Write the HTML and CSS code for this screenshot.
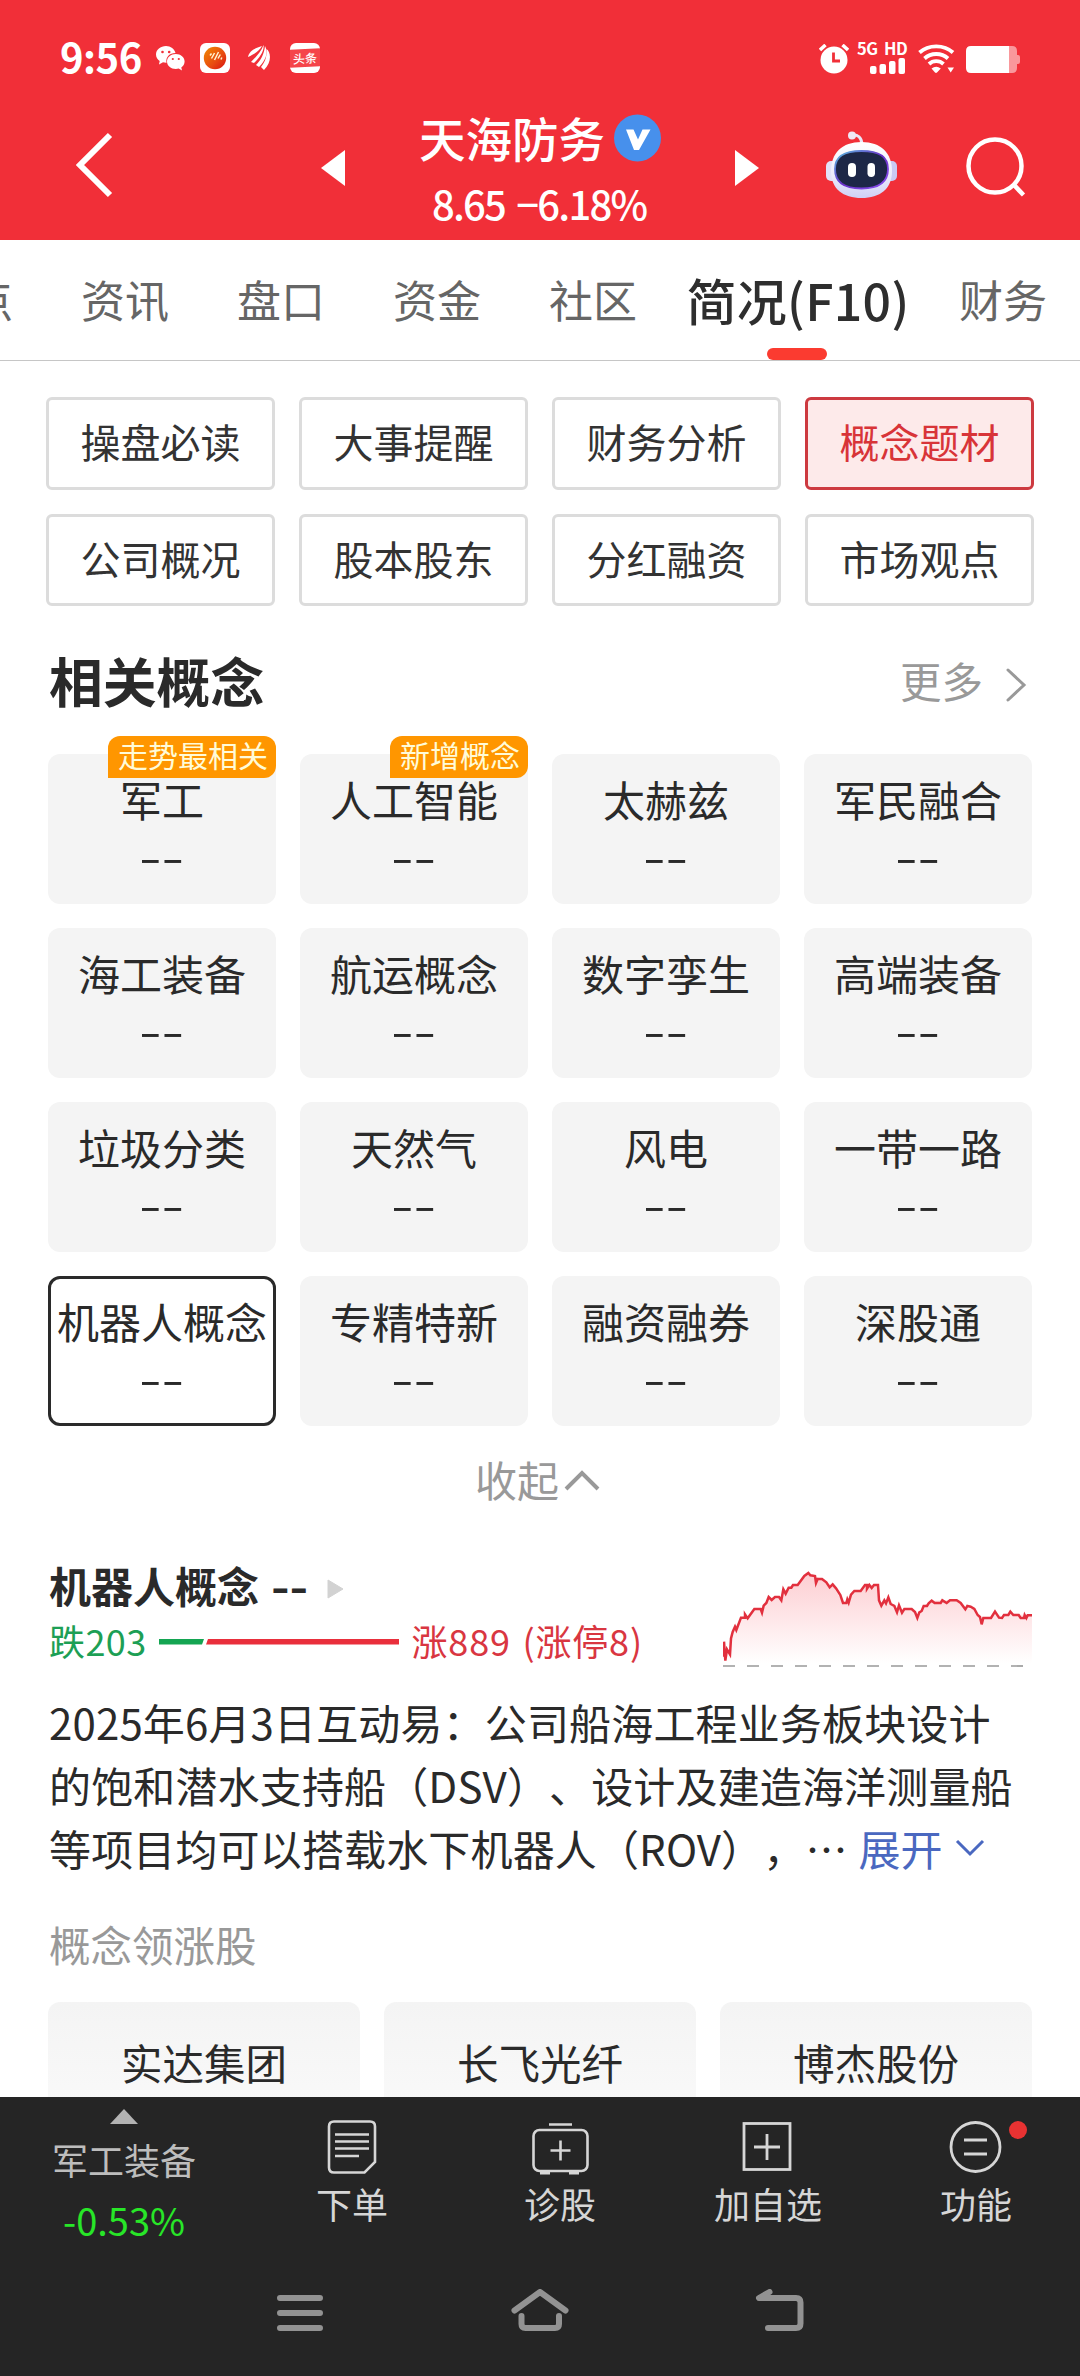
FILE: index.html
```html
<!DOCTYPE html>
<html lang="zh-CN">
<head>
<meta charset="utf-8">
<title>天海防务 简况</title>
<link rel="stylesheet" href="styles.css">
</head>
<body>
<div class="app">
  <header class="header">
    <div class="status">
      <span class="clock">9:56</span>
      <div class="status-apps">
        <svg width="29" height="26" viewBox="0 0 29 26"><path fill="#fff" d="M10 1C4.500 1 0 4.700 0 9.400c0 2.700 1.500 5 3.700 6.500L3 19.500l4-2.200c1 .3 2 .4 3 .4h.5C9.500 12 13.500 8 19.500 8 18.500 4 14.700 1 10 1z"/><path fill="#fff" d="M19.800 9c-5 0-8.800 3.300-8.800 7.500s3.900 7.500 8.800 7.500c1 0 2-.1 2.900-.4l3.300 1.800-.7-2.900c2-1.400 3.300-3.500 3.300-6C28.600 12.300 24.700 9 19.800 9z"/><g fill="#f12f38"><circle cx="6.500" cy="7" r="1.300"/><circle cx="13.200" cy="7" r="1.300"/><circle cx="16.800" cy="14" r="1.100"/><circle cx="22.800" cy="14" r="1.100"/></g></svg>
        <svg width="30" height="30" viewBox="0 0 30 30"><defs><linearGradient id="orb" x1="0" y1="0" x2="1" y2="1"><stop offset="0" stop-color="#f08a00"/><stop offset=".6" stop-color="#e84a10"/><stop offset="1" stop-color="#d81010"/></linearGradient></defs><rect width="30" height="30" rx="6" fill="#fff"/><circle cx="15" cy="15" r="11.200" fill="url(#orb)"/><path d="M10 12.500l1.500-2M11.500 15.500l3-5.500M14.500 17l4-8M18 15.500l2.300-4M21 16.500l.8-2" stroke="#fff3d0" stroke-width="1.500" fill="none"/></svg>
        <svg width="23" height="26" viewBox="0 0 23 26"><g fill="#fff"><path d="M0 12C1 6 7 3 14 1 12 5 7 9 0 12z"/><path d="M3 17C8 12 13 7 15.500 0c1 6-4 13-9.500 18z"/><path d="M8 20c5-5 8-11 9-19 4 7 0 15-6 21z"/><path d="M13 22c4-5 6-10 5.500-18C23 7 24 17 16 25z"/></g></svg>
        <div class="news-icon"><span>头条</span></div>
      </div>
      <div class="status-right">
        <svg class="alarm" width="30" height="30" viewBox="0 0 30 30"><circle cx="15" cy="16" r="13.500" fill="#fff"/><path d="M1 6l5.500-5M29 6l-5.500-5" stroke="#fff" stroke-width="3.500"/><path d="M14.500 8.500V17H21" fill="none" stroke="#f12f38" stroke-width="2.800"/></svg>
        <div class="cell">
          <span>5G&nbsp; HD</span>
          <svg width="36" height="16" viewBox="0 0 36 16" fill="#fff"><rect x="0" y="8" width="6.500" height="8" rx="2"/><rect x="9.500" y="6" width="6.500" height="10" rx="2"/><rect x="19" y="3" width="6.500" height="13" rx="2"/><rect x="28.500" y="0" width="6.500" height="16" rx="2"/></svg>
        </div>
        <svg class="wifi" width="37" height="30" viewBox="0 0 37 30"><g fill="none" stroke="#fff" stroke-width="3.800"><path d="M1.500 8.500C10.500 .2 26 .2 35 8.500"/><path d="M6.500 14.500c6.500-6 17-6 23.500 0"/><path d="M11 20c4-3.800 10.500-3.800 14.500 0"/></g><path fill="#fff" d="M13.500 24.500q4.700-3.500 9.300 0L19 28.500q-1 .8-2 0zM29.500 23.500h6.500L32.700 28.500z"/></svg>
        <svg class="battery" width="54" height="27" viewBox="0 0 54 27"><path d="M42 0h4q5 0 5 5v4h1q2 0 2 2v5q0 2-2 2h-1v4q0 5-5 5h-4z" fill="#f9989c"/><path d="M5 0h38v27H5q-5 0-5-5V5q0-5 5-5z" fill="#fff"/></svg>
      </div>
    </div>
    <div class="titlebar">
      <svg class="back" width="38" height="66" viewBox="0 0 38 66"><path d="M34 3L4 33l30 30" fill="none" stroke="#fff" stroke-width="6"/></svg>
      <svg class="prev" width="24" height="36" viewBox="0 0 24 36"><path d="M24 0v36L0 18z" fill="#fff"/></svg>
      <div class="stock">
        <div class="stock-name"><span>天海防务</span><svg width="47" height="48" viewBox="0 0 47 48"><circle cx="23.500" cy="24" r="23.500" fill="#4790ec"/><path d="M12 15.500h7.500l4.500 10 4.500-10H36.500L25 36h-5z" fill="#fff"/></svg></div>
        <div class="stock-price">8.65 −6.18%</div>
      </div>
      <svg class="next" width="24" height="36" viewBox="0 0 24 36"><path d="M0 0v36l24-18z" fill="#fff"/></svg>
      <svg class="robot" width="74" height="68" viewBox="0 0 74 68"><defs><linearGradient id="shell" x1="0" y1="0" x2="0" y2="1"><stop offset="0" stop-color="#fff"/><stop offset=".6" stop-color="#ececfb"/><stop offset="1" stop-color="#cfd0f5"/></linearGradient><linearGradient id="rim" x1="0" y1="0" x2="1" y2="1"><stop offset="0" stop-color="#58c0e0"/><stop offset=".5" stop-color="#6a30c8"/><stop offset="1" stop-color="#8a50f0"/></linearGradient></defs><path d="M27 4q9-1 10 9" fill="none" stroke="#ebe6f6" stroke-width="3"/><circle cx="27" cy="4.500" r="4" fill="#f0e8f5"/><rect x="1" y="30" width="12" height="20" rx="5" fill="#e2e2f8"/><rect x="60" y="30" width="12" height="20" rx="5" fill="#c9caf3"/><path d="M36.500 11C56 11 67 22 67 40S55 67 36.500 67 6 58 6 40 17 11 36.500 11z" fill="url(#shell)"/><path d="M36.500 20C54 20 63 25 63 38S55 57.500 36.500 57.500 10 51 10 38 19 20 36.500 20z" fill="#1d2747" stroke="url(#rim)" stroke-width="1.800"/><rect x="23" y="32" width="8" height="14" rx="4" fill="#fff"/><rect x="42.500" y="32" width="7.500" height="14" rx="3.700" fill="#fff"/></svg>
      <svg class="search" width="61" height="62" viewBox="0 0 61 62"><circle cx="29" cy="29" r="26.500" fill="none" stroke="#fff" stroke-width="4.500"/><path d="M47.500 47.500L57.500 58" stroke="#fff" stroke-width="4.500"/></svg>
    </div>
  </header>

  <nav class="tabs">
    <span class="tab">看点</span><span class="tab">资讯</span><span class="tab">盘口</span><span class="tab">资金</span><span class="tab">社区</span><span class="tab tab-active">简况(F10)</span><span class="tab">财务</span>
  </nav>

  <main class="content">
    <div class="chips">
      <span class="chip">操盘必读</span><span class="chip">大事提醒</span><span class="chip">财务分析</span><span class="chip chip-active">概念题材</span>
      <span class="chip">公司概况</span><span class="chip">股本股东</span><span class="chip">分红融资</span><span class="chip">市场观点</span>
    </div>

    <div class="section-head">
      <h2>相关概念</h2>
      <span class="more">更多<svg width="22" height="36" viewBox="0 0 22 36"><path d="M3 3l16 15L3 33" fill="none" stroke="#999" stroke-width="3" stroke-linecap="round"/></svg></span>
    </div>

    <div class="concepts">
      <div class="concept"><b>军工</b><i>--</i><em>走势最相关</em></div>
      <div class="concept"><b>人工智能</b><i>--</i><em>新增概念</em></div>
      <div class="concept"><b>太赫兹</b><i>--</i></div>
      <div class="concept"><b>军民融合</b><i>--</i></div>
      <div class="concept"><b>海工装备</b><i>--</i></div>
      <div class="concept"><b>航运概念</b><i>--</i></div>
      <div class="concept"><b>数字孪生</b><i>--</i></div>
      <div class="concept"><b>高端装备</b><i>--</i></div>
      <div class="concept"><b>垃圾分类</b><i>--</i></div>
      <div class="concept"><b>天然气</b><i>--</i></div>
      <div class="concept"><b>风电</b><i>--</i></div>
      <div class="concept"><b>一带一路</b><i>--</i></div>
      <div class="concept concept-active"><b>机器人概念</b><i>--</i></div>
      <div class="concept"><b>专精特新</b><i>--</i></div>
      <div class="concept"><b>融资融券</b><i>--</i></div>
      <div class="concept"><b>深股通</b><i>--</i></div>
    </div>

    <div class="collapse">收起<svg width="36" height="22" viewBox="0 0 36 22"><path d="M2 20L18 4l16 16" fill="none" stroke="#999" stroke-width="4"/></svg></div>

    <div class="detail">
      <div>
        <div class="detail-title">机器人概念 <i>--</i><svg width="17" height="20" viewBox="0 0 17 20"><path d="M1 1l15 9L1 19z" fill="#d2d2d2" stroke="#d2d2d2" stroke-linejoin="round"/></svg></div>
        <div class="breadth"><span class="down">跌203</span><svg width="240" height="6" viewBox="0 0 240 6"><path d="M0 0h45l-2 5.500H0z" fill="#14a552"/><path d="M49 0h191v5.500H47z" fill="#e92f3c"/></svg><span class="up">涨889 (涨停8)</span></div>
      </div>
      <svg class="chart" width="309" height="100" viewBox="249 447 927 300">
        <defs><linearGradient id="area" x1="0" y1="455" x2="0" y2="730" gradientUnits="userSpaceOnUse"><stop offset="0" stop-color="#fdcdd1"/><stop offset="1" stop-color="#fff"/></linearGradient></defs>
        <path fill="url(#area)" d="M252 700L270 700 275 650 285 622 305 592 325 592 343 567 367 567 386 533 425 538 430 515 457 495 475 492 505 460 545 478 580 500 610 549 625 545 640 514 662 512 675 495 714 495 720 550 745 535 755 556 770 570 818 568 832 590 850 558 875 542 950 540 975 565 1000 567 1025 597 1050 592 1065 575 1085 590 1110 580 1176 587V730H252z"/>
        <path class="chart-line" d="M252 710V665L256 722 261 688 270 703 273 655 278 636 285 620 289 630 303 593 315 593V583L323 595 343 567H362L366 578 371 557 379 549 386 531 395 540 405 531H417L424 541 430 508 437 521 446 503H454L459 495H473L493 468 505 459 511 466 525 468 528 489 533 477H546L559 487 569 502 578 493 588 505 601 525 609 549H619L622 538 626 548 633 524 643 513H662L675 495H681V506L688 495 695 504 702 495H714L717 541 724 557 733 541 738 550 745 532 752 552 763 558 771 577 777 556 786 578 793 567H815L825 576 832 594 838 577 845 573 851 558H861L866 550 875 542 884 549H902L907 541 920 549 930 541H950L962 549 976 568 982 558 992 560 1003 567 1013 585 1020 591 1025 613 1030 594H1053L1065 575 1077 593 1086 594 1092 585H1105L1111 575 1120 585H1136L1142 594H1152L1154 585 1159 594 1163 586H1176"/>
        <path d="M249 738h927" stroke="#999" stroke-width="5" stroke-dasharray="36 36"/>
      </svg>
    </div>

    <div class="summary">
      <p>2025年6月3日互动易：公司船海工程业务板块设计</p>
      <p>的饱和潜水支持船（DSV）、设计及建造海洋测量船</p>
      <p>等项目均可以搭载水下机器人（ROV），<span class="dots">⋯</span><span class="expand">展开<svg width="30" height="18" viewBox="0 0 30 18"><path d="M2 2l13 13L28 2" fill="none" stroke="#4a68c0" stroke-width="3"/></svg></span></p>
    </div>

    <div class="leaders-title">概念领涨股</div>
    <div class="leaders"><div>实达集团</div><div>长飞光纤</div><div>博杰股份</div></div>
  </main>

  <footer class="footer">
    <div class="toolbar">
      <div class="index"><svg width="28" height="15" viewBox="0 0 28 15"><path d="M14 0l14 15H0z" fill="#b3b3b3"/></svg><span>军工装备</span><span class="change">-0.53%</span></div>
      <div class="tool"><svg width="60" height="56" viewBox="0 0 60 56" fill="none" stroke="#d6d6d6" stroke-width="2.600"><path d="M12 2.500H48q5 0 5 5V43L42.500 53.500H12q-5 0-5-5V7.500q0-5 5-5z"/><path d="M13 15.500H47M13 22.500H47M13 29.500H47M13 37H37"/></svg><span>下单</span></div>
      <div class="tool"><svg width="60" height="56" viewBox="0 0 60 56" fill="none" stroke="#d6d6d6" stroke-width="2.600"><rect x="3.500" y="11" width="54" height="41" rx="6"/><path d="M19 5.500H42M20.500 31.500H40.500M30.500 21.500V41.500"/><path d="M10 53.500H20M39 53.500H49" stroke-width="4"/></svg><span>诊股</span></div>
      <div class="tool"><svg width="60" height="56" viewBox="0 0 60 56" fill="none" stroke="#d6d6d6" stroke-width="2.800"><rect x="6" y="4.500" width="46" height="46"/><path d="M16 28H42M29 15V41"/></svg><span>加自选</span></div>
      <div class="tool"><svg width="60" height="56" viewBox="0 0 60 56" fill="none" stroke="#d6d6d6" stroke-width="2.800"><circle cx="29.500" cy="28" r="24.500"/><path d="M18 21H41M18 35H41"/></svg><span>功能</span><span class="dot"></span></div>
    </div>
    <div class="sysnav">
      <svg width="60" height="48" viewBox="-7 0 60 48"><path d="M3 9H43M3 24H43M3 39H43"/></svg>
      <svg width="60" height="48" viewBox="0 0 60 48"><path d="M4.500 21.500L30 3 55.500 21.500M11.500 27V35q0 4 4 4H45q4 0 4-4V27"/></svg>
      <svg width="60" height="48" viewBox="-5 0 60 48"><path d="M14.500 3L4 9H41q4.500 0 4.500 4.500V34.500q0 4.500-4.500 4.500H13"/></svg>
    </div>
  </footer>
</div>
</body>
</html>
```

FILE: styles.css
```css
* { box-sizing: border-box; margin: 0; padding: 0; }
body { font-family: "Noto Sans CJK SC", sans-serif; background: #fff; color: #2a2a2a; text-spacing-trim: space-all; }
svg { display: block; flex: none; }
b, i, em { font-style: normal; font-weight: 400; }
.app { width: 1080px; height: 2376px; overflow: hidden; display: flex; flex-direction: column; }

.header { height: 240px; background: #f12f38; color: #fff; flex: none; }
.status { height: 100px; display: flex; align-items: flex-start; padding: 41px 60px 0 60px; }
.clock { width: 96px; font: 600 40px/30px "Noto Sans CJK SC", sans-serif; letter-spacing: -.5px; white-space: nowrap; }
.status-apps { display: flex; align-items: center; height: 30px; margin-top: 2px; gap: 18px; }
.status-apps svg:nth-child(2) { margin-left: -3px; }
.news-icon { width: 30px; height: 30px; border-radius: 6px; background: #fff; padding-top: 6px; overflow: hidden; margin-left: 1px; }
.news-icon span { display: block; height: 18px; background: #f5444a; font-size: 12px; font-weight: 500; line-height: 17px; text-align: center; transform: skewY(-3deg); }
.status-right { margin-left: auto; display: flex; align-items: flex-start; }
.alarm { margin-top: 3px; }
.cell { width: 50px; margin: 0 11px 0 8px; font: 600 16.500px/14px "Noto Sans CJK SC", sans-serif; letter-spacing: -.5px; white-space: nowrap; }
.cell span { display: block; height: 17px; }
.cell svg { margin-left: 13px; }
.wifi { margin-top: 3px; }
.battery { margin: 5px 0 0 11px; }

.titlebar { height: 140px; display: flex; align-items: flex-start; padding-left: 76px; }
.back { margin-top: 32px; }
.prev { margin: 50px 0 0 207px; }
.stock { width: 250px; margin-left: 71px; padding: 9px 0 0 3px; }
.stock-name { display: flex; align-items: center; height: 58px; font-size: 46.500px; font-weight: 500; gap: 9px; margin-bottom: 11px; white-space: nowrap; }
.stock-name span { line-height: 54px; margin-top: -2px; }
.stock-price { font: 500 40px/50px "Noto Sans CJK SC", sans-serif; white-space: nowrap; padding-left: 13px; letter-spacing: -1.800px; word-spacing: 4px; }
.next { margin: 50px 0 0 69px; }
.robot { margin: 31px 0 0 66px; }
.search { margin: 37px 0 0 67px; }

.tabs { height: 121px; flex: none; display: flex; margin-left: -109px; border-bottom: 1px solid #c6c6c6; }
.tab { width: 156px; flex: none; text-align: center; font-size: 44px; line-height: 118px; color: #666; white-space: nowrap; }
.tab-active { width: 254px; font-size: 50px; font-weight: 500; color: #2e2e2e; position: relative; letter-spacing: .3px; }
.tab-active::after { content: ""; position: absolute; left: 96px; bottom: 0; width: 60px; height: 12px; border-radius: 6px; background: #fb3b30; }

.content { height: 1736px; flex: none; overflow: hidden; padding: 36px 48px 0; }
.chips { display: grid; grid-template-columns: repeat(4, 229px); grid-auto-rows: 92.500px; gap: 24px; margin: 0 -2px; }
.chip { border: 3px solid #dcdcdc; border-radius: 6px; text-align: center; font-size: 40px; line-height: 82px; color: #333; }
.chip-active { border-color: #cd3a40; background: #fdeaea; color: #d83438; }

.section-head { height: 80px; margin: 34px 0; display: flex; align-items: center; justify-content: space-between; }
h2 { font-size: 53.800px; font-weight: 600; line-height: 80px; padding-left: 1px; }
.more { display: flex; align-items: center; gap: 22px; font-size: 41.500px; color: #999; line-height: 80px; padding-right: 5px; }
.more svg { margin-top: 9px; }

.concepts { display: grid; grid-template-columns: repeat(4, 228px); grid-auto-rows: 150px; gap: 24px; }
.concept { position: relative; background: #f4f4f4; border-radius: 12px; display: flex; flex-direction: column; align-items: center; padding-top: 24px; white-space: nowrap; }
.concept b { font-size: 42px; line-height: 42px; }
.concept i { font-size: 42px; line-height: 60px; margin-top: 5px; transform: scaleX(1.550); }
.concept em { position: absolute; right: 0; top: -18px; height: 42px; padding: 0 8px 0 10px; border-radius: 12px 12px 12px 0; background: #ff9600; color: #fffbd8; font-size: 30px; line-height: 37px; }
.concept-active { background: #fff; border: 3px solid #2a2a2a; padding-top: 21px; }

.collapse { height: 60px; margin-top: 22px; padding-right: 5px; display: flex; align-items: center; justify-content: center; gap: 5px; font-size: 42px; color: #999; }
.collapse svg { margin-top: 4px; }

.detail { display: flex; justify-content: space-between; height: 100px; margin-top: 52px; }
.detail-title { display: flex; align-items: center; height: 50px; padding-left: 1px; font-size: 42px; font-weight: 600; line-height: 50px; white-space: pre; }
.detail-title i { font-weight: 600; transform: scaleX(1.200); margin-left: 5px; }
.detail-title svg { margin: 8px 0 0 22px; }
.breadth { display: flex; align-items: center; height: 40px; margin-top: 10px; padding-left: 1px; font-size: 36px; line-height: 40px; letter-spacing: .4px; white-space: nowrap; }
.breadth svg { margin: 3px 13px 0 12px; }
.down { color: #1d9f55; }
.up { color: #d93641; letter-spacing: .8px; word-spacing: 3px; }
.chart { margin-top: 9px; }
.chart-line { fill: none; stroke: #e2303e; stroke-width: 7.500; }

.summary { margin-top: 30px; padding-left: 1px; font-size: 42px; line-height: 63px; letter-spacing: .15px; }
.summary p { display: flex; align-items: center; white-space: nowrap; }
.dots { width: 42px; margin: 0 11px 0 0; text-align: center; }
.expand { display: flex; align-items: center; gap: 12px; color: #4a68c0; }

.leaders-title { margin-top: 40px; padding-left: 1px; font-size: 41.500px; line-height: 50px; color: #999; }
.leaders { display: grid; grid-template-columns: repeat(3, 312px); gap: 24px; margin-top: 33px; }
.leaders div { height: 150px; border-radius: 12px; background: linear-gradient(#f4f4f4, #fbfbfb); text-align: center; font-size: 41.500px; line-height: 120px; }

.footer { flex: 1; background: #252525; color: #d6d6d6; }
.toolbar { display: flex; height: 165px; font-size: 36px; }
.index { width: 248px; display: flex; flex-direction: column; align-items: center; padding-top: 12px; color: #bdbdbd; }
.index span { line-height: 50px; margin-top: 10px; }
.index .change { font-size: 38px; margin-top: 11px; color: #28e628; font-weight: 400; }
.tool { position: relative; width: 208px; display: flex; flex-direction: column; align-items: center; padding-top: 22px; }
.tool span { line-height: 50px; margin-top: 3px; }
.tool .dot { position: absolute; left: 137px; top: 24px; width: 18px; height: 18px; margin: 0; border-radius: 50%; background: #e83232; }
.sysnav { display: flex; justify-content: center; gap: 180px; margin-top: 27px; }
.sysnav svg { fill: none; stroke: #929292; stroke-width: 6; stroke-linecap: round; stroke-linejoin: round; }
```
